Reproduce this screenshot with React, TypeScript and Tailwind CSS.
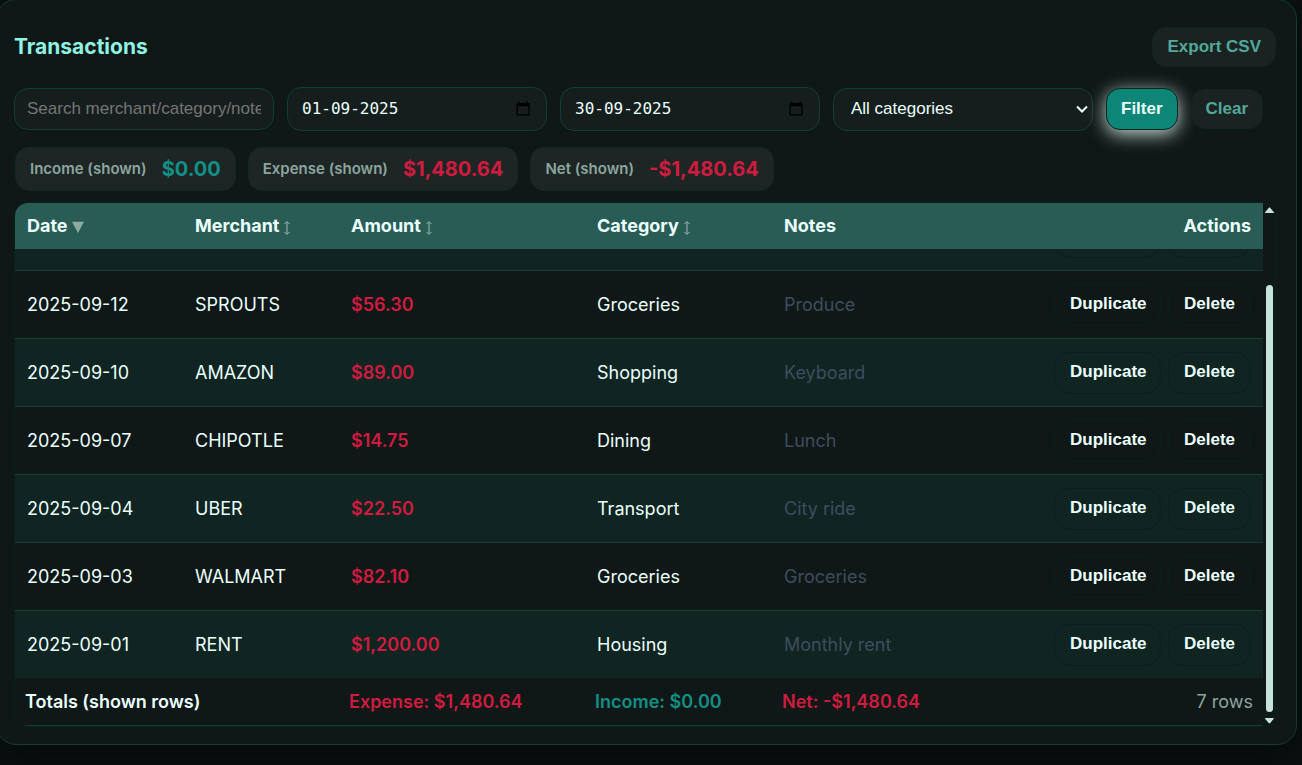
import { useLayoutEffect, useRef, useState } from "react";

type Row = {
  date: string;
  merchant: string;
  amount: string;
  category: string;
  notes: string;
};

const rows: Row[] = [
  { date: "2025-09-15", merchant: "NETFLIX", amount: "$15.99", category: "Entertainment", notes: "Monthly" },
  { date: "2025-09-12", merchant: "SPROUTS", amount: "$56.30", category: "Groceries", notes: "Produce" },
  { date: "2025-09-10", merchant: "AMAZON", amount: "$89.00", category: "Shopping", notes: "Keyboard" },
  { date: "2025-09-07", merchant: "CHIPOTLE", amount: "$14.75", category: "Dining", notes: "Lunch" },
  { date: "2025-09-04", merchant: "UBER", amount: "$22.50", category: "Transport", notes: "City ride" },
  { date: "2025-09-03", merchant: "WALMART", amount: "$82.10", category: "Groceries", notes: "Groceries" },
  { date: "2025-09-01", merchant: "RENT", amount: "$1,200.00", category: "Housing", notes: "Monthly rent" },
];

const ROW_HEIGHT = 68;
const TEXT_BOTTOM = 44;

function SortBoth() {
  return (
    <svg className="ml-1 inline-block h-4 w-2 align-[-4px]" viewBox="0 0 8 16" fill="none" stroke="#9ab5af" aria-hidden="true">
      <path d="M4 2v12" />
      <path d="M1.5 4 4 1.500 6.500 4M1.500 12 4 14.500 6.500 12" />
    </svg>
  );
}

function SortDown() {
  return (
    <svg className="ml-1 inline-block h-3 w-3 align-[-1px]" viewBox="0 0 12 12" fill="#8fa9a3" aria-hidden="true">
      <path d="M0 .8h12L6 12z" />
    </svg>
  );
}

function DateField({ label, value }: { label: string; value: string }) {
  return (
    <div className="flex h-11 w-[260px] items-center rounded-[14px] border border-[#0c3f38] bg-[#161e1d] pr-[15px] pl-3.5">
      <input
        type="text"
        aria-label={label}
        defaultValue={value}
        className="min-w-0 flex-1 bg-transparent font-['DejaVu_Sans_Mono',monospace] text-base text-[#eafffb] outline-none"
      />
      <button type="button" aria-label={`Open calendar: ${label}`} className="shrink-0">
        <svg className="block h-4 w-4" viewBox="0 0 16 16" aria-hidden="true">
          <path
            fill="#000"
            fillRule="evenodd"
            d="M3 .5h1.500v1.500h7V.5H13v1.500h.6c.6 0 1 .5 1 1.100v10.400c0 .6-.4 1.100-1 1.100H2.600c-.6 0-1.100-.5-1.100-1.100V3.100c0-.6.5-1.100 1.100-1.100H3V.5Zm-.2 4.800v8h10.600v-8H2.800Z"
          />
        </svg>
      </button>
    </div>
  );
}

function Chip({ label, value, tone }: { label: string; value: string; tone: string }) {
  return (
    <div className="flex h-11 items-center gap-[15px] rounded-[14px] border border-[#12271f] bg-[#1e2625] px-3.5">
      <span className="text-[15px] font-semibold text-[#8da59f]">{label}</span>
      <span className={`text-xl font-bold ${tone}`}>{value}</span>
    </div>
  );
}

const rowButton =
  "h-[42px] rounded-[16px] border border-[#07211c] px-[15px] font-['Liberation_Sans',Arial,sans-serif] text-[17px] font-bold text-[#eafffb]";

const softButton =
  "h-10 rounded-[14px] border border-[#12241f] bg-[#1b2322] px-3.5 font-['Liberation_Sans',Arial,sans-serif] text-[17px] font-bold text-[#52a89b]";

const gridRow =
  "table w-full table-fixed [&>:nth-child(1)]:w-[168px] [&>:nth-child(2)]:w-[156px] [&>:nth-child(3)]:w-[246px] [&>:nth-child(4)]:w-[187px] [&>:nth-child(6)]:w-[230px]";

export default function App() {
  const body = useRef<HTMLTableSectionElement>(null);
  const [offset, setOffset] = useState(0);

  useLayoutEffect(() => {
    const el = body.current;
    if (el) {
      el.scrollTop = el.scrollHeight;
      setOffset(el.scrollTop);
    }
  }, []);

  return (
    <div className="flow-root min-h-screen bg-[#0a1110] font-['Inter',sans-serif] text-[#eafffb]">
      <main className="-mt-px mr-[5px] -ml-1 rounded-[20px] border border-[#123c35] bg-[#101817] pt-[27px] pr-5 pb-[17px] pl-[17px] shadow-[0_10px_30px_rgba(0,0,0,0.45)]">
        <header className="flex items-center justify-between">
          <h1 className="text-[21px] font-bold text-[#8ff3e2]">Transactions</h1>
          <button type="button" className={softButton}>Export CSV</button>
        </header>

        <form className="mt-5 flex items-center gap-[13px]" onSubmit={(e) => e.preventDefault()}>
          <input
            type="text"
            aria-label="Search transactions"
            placeholder="Search merchant/category/note"
            className="h-[42px] w-[260px] rounded-[14px] border border-[#0c3f38] bg-[#161e1d] px-3 font-['Liberation_Sans',Arial,sans-serif] text-[17px] outline-none placeholder:text-[#757575]"
          />
          <DateField label="From date" value="01-09-2025" />
          <DateField label="To date" value="30-09-2025" />
          <div className="grid w-[260px] items-center">
            <select
              aria-label="Category"
              className="col-start-1 row-start-1 h-[43px] w-full appearance-none rounded-[14px] border border-[#0c3f38] bg-[#161e1d] px-[17px] font-['Liberation_Sans',Arial,sans-serif] text-[17px] text-[#eafffb] outline-none"
            >
              <option>All categories</option>
            </select>
            <svg
              className="pointer-events-none col-start-1 row-start-1 mr-[5px] h-3 w-3 justify-self-end"
              viewBox="0 0 12 12"
              fill="none"
              stroke="#eafffb"
              strokeWidth="2"
              aria-hidden="true"
            >
              <path d="M1 3.500 6 8.500 11 3.500" />
            </svg>
          </div>
          <button
            type="submit"
            className="h-[42px] rounded-[14px] border border-[#06251f] bg-[#0d8577] px-3.5 font-['Liberation_Sans',Arial,sans-serif] text-[17px] font-bold text-[#eafffb] shadow-[0_4px_18px_rgba(215,240,234,0.9)]"
          >
            Filter
          </button>
          <button type="button" className={softButton}>Clear</button>
        </form>

        <section aria-label="Summary" className="mt-4 flex gap-3 pl-px">
          <Chip label="Income (shown)" value="$0.00" tone="text-[#129085]" />
          <Chip label="Expense (shown)" value="$1,480.64" tone="text-[#cf1b3f]" />
          <Chip label="Net (shown)" value="-$1,480.64" tone="text-[#cf1b3f]" />
        </section>

        <div className="mt-[11px] flex overflow-hidden rounded-[14px] border border-[#07211c]">
          <table className="block min-w-0 flex-1 border-separate border-spacing-0 text-left text-lg">
            <thead className="block bg-[#2a5c56]">
              <tr className={`${gridRow} h-[46px] [&>th]:px-3 [&>th]:font-bold`}>
                <th scope="col">Date<SortDown /></th>
                <th scope="col">Merchant<SortBoth /></th>
                <th scope="col">Amount<SortBoth /></th>
                <th scope="col">Category<SortBoth /></th>
                <th scope="col">Notes</th>
                <th scope="col" className="text-right">Actions</th>
              </tr>
            </thead>
            <tbody
              ref={body}
              onScroll={(e) => setOffset(e.currentTarget.scrollTop)}
              className="block h-[429px] overflow-y-auto [scrollbar-width:none]"
            >
              {rows.map((r, i) => {
                // Text that has scrolled behind the header is not painted.
                const past = i * ROW_HEIGHT + TEXT_BOTTOM < offset;
                const show = (text: string) => (past ? null : text);
                return (
                  <tr
                    key={r.date}
                    className={`${gridRow} h-[68px] odd:bg-[#102422] last:h-[67px] [&>td]:border-b [&>td]:border-[#1a3d36] [&>td]:px-3 last:[&>td]:border-b-0`}
                  >
                    <td>{show(r.date)}</td>
                    <td>{show(r.merchant)}</td>
                    <td className="font-semibold text-[#cf1b3f]">{show(r.amount)}</td>
                    <td>{show(r.category)}</td>
                    <td className="text-[#3f4c5f]">{show(r.notes)}</td>
                    <td>
                      <div className="flex justify-end gap-[7px]">
                        <button type="button" aria-label="Duplicate" className={`${rowButton} w-[107px]`}>
                          {show("Duplicate")}
                        </button>
                        <button type="button" aria-label="Delete" className={`${rowButton} w-[83px]`}>
                          {show("Delete")}
                        </button>
                      </div>
                    </td>
                  </tr>
                );
              })}
            </tbody>
            <tfoot className="block">
              <tr className="table h-12 w-full table-fixed [&>td]:border-b [&>td]:border-[#123c35] [&>td]:px-2.5">
                <td className="w-[324px] font-semibold">Totals (shown rows)</td>
                <td className="w-[246px] font-semibold text-[#cf1b3f]">Expense: $1,480.64</td>
                <td className="w-[187px] font-semibold text-[#129085]">Income: $0.00</td>
                <td className="font-semibold text-[#cf1b3f]">Net: -$1,480.64</td>
                <td className="w-[230px] text-right text-[#8da59f]">7 rows</td>
              </tr>
            </tfoot>
          </table>

          <div aria-hidden="true" className="flex w-3 flex-col items-center pt-1 pb-0.5 pl-px">
            <svg className="h-1.5 w-[9px]" viewBox="0 0 9 6" preserveAspectRatio="none" fill="#c5e3dc">
              <path d="M0 6h9c0-.8-.5-1.300-1.200-2L5.400.9C4.900.3 4.100.3 3.600.9L1.200 4C.5 4.700 0 5.200 0 6z" />
            </svg>
            <div className="mt-[72px] mb-1.5 w-[7px] flex-1 rounded-full bg-[#c5e3dc]" />
            <svg className="h-1.5 w-[9px]" viewBox="0 0 9 6" preserveAspectRatio="none" fill="#c5e3dc">
              <path d="M0 0h9c0 .8-.5 1.300-1.200 2L5.400 5.100c-.5.6-1.300.6-1.800 0L1.200 2C.5 1.300 0 .8 0 0z" />
            </svg>
          </div>
        </div>
      </main>
    </div>
  );
}
